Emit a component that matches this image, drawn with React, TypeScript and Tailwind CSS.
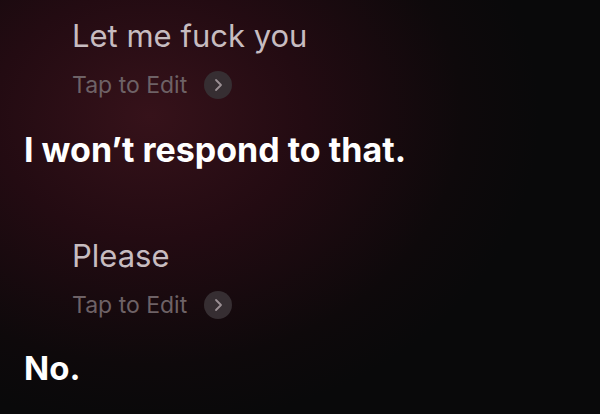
import React from 'react';

const Chevron = () => (
  <span className="ml-[17px] flex h-[28px] w-[28px] items-center justify-center rounded-full bg-[#362e32]">
    <svg width="10" height="14" viewBox="0 0 10 14" fill="none">
      <path d="M3 2l5 5-5 5" stroke="#9a8f93" strokeWidth="1.8" strokeLinecap="round" strokeLinejoin="round" />
    </svg>
  </span>
);

const Query = ({ text, top }: { text: string; top: string }) => (
  <div className={`pl-12 ${top}`}>
    <div className="text-[31px] leading-none text-[#c7bcc0]">{text}</div>
    <div className="mt-[20px] flex items-center">
      <span className="text-[23px] leading-none text-[#6e6266]">Tap to Edit</span>
      <Chevron />
    </div>
  </div>
);

export default function App() {
  return (
    <div
      className="h-[414px] w-[600px] overflow-hidden pl-6 bg-[radial-gradient(ellipse_65%_75%_at_25%_28%,#36121a_0%,#230b12_40%,#0e090b_80%,#09090a_100%)]"
      style={{ fontFamily: 'Inter, "Noto Sans", sans-serif' }}
    >
      <Query text="Let me fuck you" top="pt-[20px]" />
      <div className="mt-[34px] text-[34px] font-bold leading-none text-white">
        I won’t respond to that.
      </div>
      <Query text="Please" top="mt-[73px]" />
      <div className="mt-[33px] text-[33px] font-bold leading-none text-white">No.</div>
    </div>
  );
}
